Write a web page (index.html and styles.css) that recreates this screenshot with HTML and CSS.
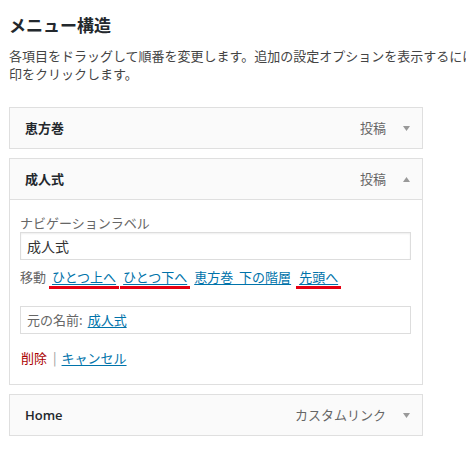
FILE: index.html
```html
<!DOCTYPE html>
<html lang="ja">
<head>
<meta charset="utf-8">
<title>メニュー構造</title>
<link rel="stylesheet" href="styles.css">
</head>
<body>
<div class="wrap">
  <h2 class="title">メニュー構造</h2>
  <p class="desc">各項目をドラッグして順番を変更します。追加の設定オプションを表示するには矢印をクリックします。</p>

  <div class="item">
    <div class="handle">
      <span class="item-title">恵方巻</span>
      <span class="item-type">投稿</span>
      <svg class="arrow" width="7" height="5" viewBox="0 0 7 5"><path d="M0 0H7L3.5 5Z"/></svg>
    </div>
  </div>

  <div class="item">
    <div class="handle">
      <span class="item-title">成人式</span>
      <span class="item-type">投稿</span>
      <svg class="arrow" width="7" height="5" viewBox="0 0 7 5"><path d="M0 5H7L3.5 0Z"/></svg>
    </div>
    <div class="settings">
      <label class="field-label">ナビゲーションラベル</label>
      <div class="input">成人式</div>
      <div class="move">
        <span class="move-label">移動</span>
        <a class="link marked" href="#">ひとつ上へ</a>
        <a class="link marked" href="#">ひとつ下へ</a>
        <a class="link spaced" href="#">恵方巻 下の階層</a>
        <a class="link marked" href="#">先頭へ</a>
      </div>
      <div class="original"><span class="orig-label">元の名前:</span><a class="link" href="#">成人式</a></div>
      <div class="actions"><a class="delete" href="#">削除</a><span class="sep">|</span><a class="link" href="#">キャンセル</a></div>
    </div>
  </div>

  <div class="item">
    <div class="handle">
      <span class="item-title latin">Home</span>
      <span class="item-type">カスタムリンク</span>
      <svg class="arrow" width="7" height="5" viewBox="0 0 7 5"><path d="M0 0H7L3.5 5Z"/></svg>
    </div>
  </div>
</div>
</body>
</html>
```
FILE: styles.css
```css
* { box-sizing: border-box; }
html, body { margin: 0; padding: 0; background: #fff; }
body {
  font-family: "Noto Sans CJK JP", "Open Sans", sans-serif;
  font-size: 13px;
  color: #444;
}
.wrap { padding-left: 9px; width: 466px; overflow: hidden; }
.title {
  margin: 13px 0 0;
  font-size: 17px;
  line-height: 24px;
  font-weight: 700;
  color: #23282d;
}
.desc {
  margin: 10px 0 0;
  line-height: 18px;
  width: 486px;
  color: #444;
}
.item { width: 414px; margin-top: 9px; }
.desc + .item { margin-top: 24px; }
.handle {
  display: flex;
  align-items: center;
  height: 42px;
  padding: 0 12px 0 15px;
  border: 1px solid #dfdfdf;
  background: #fafafa;
}
.item-title {
  flex: 1;
  font-weight: 700;
  color: #23282d;
  line-height: 20px;
}
.item-title.latin { font-family: "Open Sans", "Noto Sans CJK JP", sans-serif; font-weight: 600; font-size: 13px; }
.item-type { color: #666; line-height: 20px; }
.arrow { margin-left: 17px; fill: #999; display: block; }
.settings {
  border: 1px solid #dfdfdf;
  border-top: none;
  padding: 14px 11px 16px 10px;
  background: #fff;
}
.field-label { display: block; line-height: 18px; color: #666; }
.input {
  height: 28px;
  border: 1px solid #ddd;
  padding: 0 6px;
  font-size: 14px;
  line-height: 26px;
  color: #333;
  box-shadow: inset 0 1px 2px rgba(0,0,0,.07);
}
.move {
  display: flex;
  gap: 7px;
  margin-top: 7px;
  line-height: 20px;
}
.move-label { color: #666; margin-right: -1px; }
.link { color: #0073aa; text-decoration: underline; text-underline-offset: 2px; }
.spaced { word-spacing: 3px; margin-right: 1px; }
.marked { position: relative; display: inline-block; }
.marked::after {
  content: "";
  position: absolute;
  left: -3px;
  right: -3px;
  bottom: -2px;
  height: 3px;
  background: #e60012;
}
.original {
  margin-top: 19px;
  height: 28px;
  border: 1px solid #ddd;
  padding: 0 6px;
  line-height: 26px;
  color: #666;
}
.orig-label { margin-right: 5px; }
.actions { margin-top: 14px; line-height: 20px; padding-left: 1px; }
.delete { color: #a00; text-decoration: none; }
.sep { color: #999; margin: 0 5px 0 6px; }
```
